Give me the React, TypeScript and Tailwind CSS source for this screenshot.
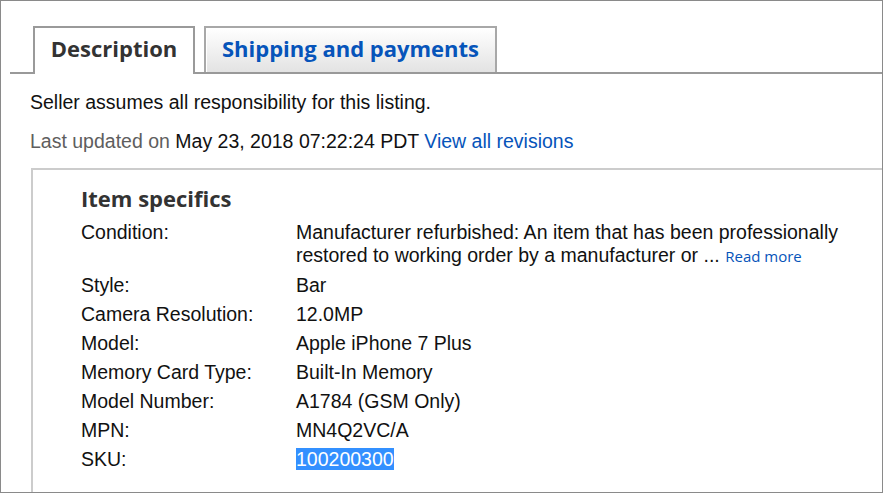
const specifics = [
  { label: "Condition:", value: "condition" },
  { label: "Style:", value: "Bar" },
  { label: "Camera Resolution:", value: "12.0MP" },
  { label: "Model:", value: "Apple iPhone 7 Plus" },
  { label: "Memory Card Type:", value: "Built-In Memory" },
  { label: "Model Number:", value: "A1784 (GSM Only)" },
  { label: "MPN:", value: "MN4Q2VC/A" },
  { label: "SKU:", value: "sku" },
]

const arial = "font-['Liberation_Sans',Arial,sans-serif]"
const segoe = "font-['Open_Sans','Noto_Sans',sans-serif]"

function Value({ value }: { value: string }) {
  if (value === "condition") {
    return (
      <>
        <div>Manufacturer refurbished: An item that has been professionally</div>
        <div>
          <span>restored to working order by a manufacturer or ... </span>
          <a className={`${segoe} text-[15px] text-[#0654ba]`}>Read more</a>
        </div>
      </>
    )
  }
  if (value === "sku") {
    return <span className="bg-[#3390ff] text-white">100200300</span>
  }
  return <span>{value}</span>
}

export default function App() {
  return (
    <div className={`w-[883px] h-[493px] overflow-hidden border border-[#8a8a8a] bg-white ${arial}`}>
      <div className="ml-[9px] flex h-full flex-col pt-[25px]">
        <div className="flex items-end gap-[9px] border-b-2 border-[#999] pl-[23px]">
          <div className={`-mb-[2px] flex h-[48px] w-[162px] items-center justify-center border-2 border-b-0 border-[#9a9a9a] bg-white pb-[5px] ${segoe} text-[22px] font-bold text-[#333]`}>
            Description
          </div>
          <div className={`flex h-[46px] w-[293px] items-center justify-center border-2 border-b-0 border-[#a8a8a8] bg-gradient-to-b from-white to-[#e3e3e3] pb-[4px] shadow-[inset_1px_1px_0_#fff] ${segoe} text-[22px] font-bold text-[#0654ba]`}>
            Shipping and payments
          </div>
        </div>

        <div className="pl-[20px] pt-[17px] text-[19.5px] leading-[22px] text-[#111]">
          <p>Seller assumes all responsibility for this listing.</p>
          <p className="mt-[17px]">
            <span className="text-[#5e5e5e]">Last updated on </span>
            <span>May 23, 2018 07:22:24 PDT </span>
            <a className="text-[#0654ba]">View all revisions</a>
          </p>
        </div>

        <div className="ml-[21px] mt-[16px] flex-1 border-l-2 border-t-2 border-[#cccccc] pl-[48px] pt-[13px]">
          <h2 className={`${segoe} text-[22px] font-bold leading-[30px] text-[#333]`}>Item specifics</h2>
          <div className="mt-[8px] flex flex-col gap-[6px] text-[19.5px] leading-[23px] text-[#111]">
            {specifics.map((row) => (
              <div key={row.label} className="flex">
                <div className="w-[215px] shrink-0">{row.label}</div>
                <div className="w-[570px] shrink-0">
                  <Value value={row.value} />
                </div>
              </div>
            ))}
          </div>
        </div>
      </div>
    </div>
  )
}
